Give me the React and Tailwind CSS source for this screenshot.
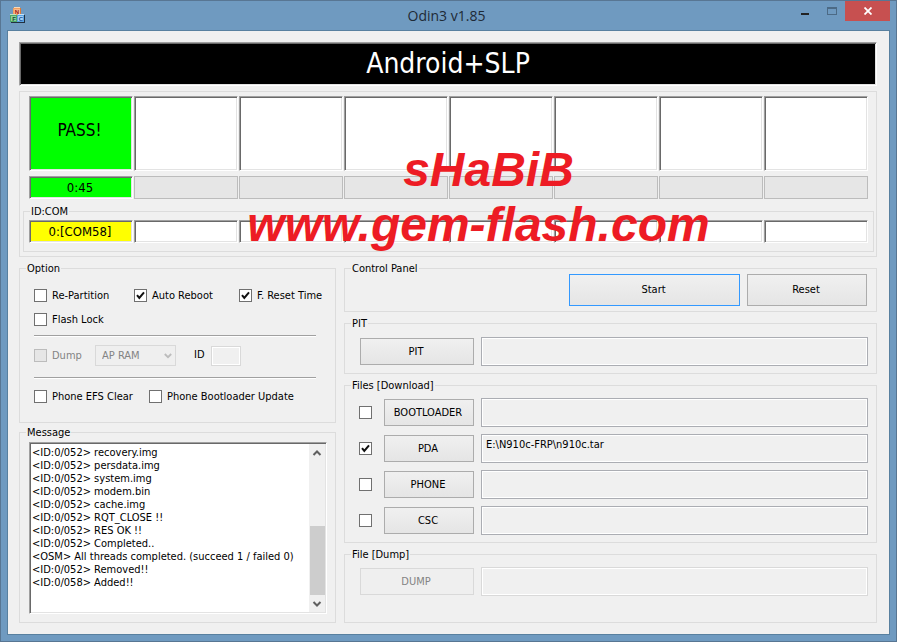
import { useState } from "react"
import clsx from "clsx"

const SLOTS = [
  { status: "PASS!", time: "0:45", port: "0:[COM58]" },
  {}, {}, {}, {}, {}, {}, {},
]

const LOG = [
  "<ID:0/052> recovery.img",
  "<ID:0/052> persdata.img",
  "<ID:0/052> system.img",
  "<ID:0/052> modem.bin",
  "<ID:0/052> cache.img",
  "<ID:0/052> RQT_CLOSE !!",
  "<ID:0/052> RES OK !!",
  "<ID:0/052> Completed..",
  "<OSM> All threads completed. (succeed 1 / failed 0)",
  "<ID:0/052> Removed!!",
  "<ID:0/058> Added!!",
]

const FILES = [
  { name: "BOOTLOADER", path: "", on: false },
  { name: "PDA", path: "E:\\N910c-FRP\\n910c.tar", on: true },
  { name: "PHONE", path: "", on: false },
  { name: "CSC", path: "", on: false },
]

// Two pixel sunken edge, like WS_EX_CLIENTEDGE
const SUNKEN =
  "border border-t-[#a0a0a0] border-l-[#a0a0a0] border-r-white border-b-white shadow-[inset_1px_1px_0_#696969,inset_-1px_-1px_0_#e3e3e3]"

function AppIcon() {
  return (
    <svg width="16" height="16" viewBox="0 0 16 16" shapeRendering="crispEdges" aria-hidden="true">
      <rect x="4" y="0" width="6" height="1" fill="#f7d9b8" />
      <rect x="3" y="1" width="8" height="7" fill="#f0a062" />
      <rect x="10" y="1" width="1" height="7" fill="#dd7a35" />
      <rect x="4" y="2" width="6" height="5" fill="#f8b98a" />
      <rect x="1" y="15" width="14" height="1" fill="#223040" />
      <rect x="14" y="8" width="1" height="8" fill="#223040" />
      <rect x="0" y="8" width="7" height="7" fill="#4fa868" />
      <rect x="0" y="7" width="6" height="1" fill="#bfe3c4" />
      <rect x="1" y="9" width="5" height="5" fill="#8fce9c" />
      <rect x="7" y="8" width="7" height="7" fill="#5aa3e0" />
      <rect x="8" y="7" width="6" height="1" fill="#c8e2f7" />
      <rect x="8" y="9" width="5" height="5" fill="#a8d2f4" />
      <g fontFamily="Liberation Sans" fontWeight="bold" fontSize="6" textAnchor="middle">
        <text x="7" y="7" fill="#a01818">N</text>
        <text x="4" y="14" fill="#10502a">F</text>
        <text x="11" y="14" fill="#144a94">C</text>
      </g>
    </svg>
  )
}

function TitleBar() {
  return (
    <header className="relative flex h-[29px] items-start pl-[3px]">
      <div className="pt-[6px]">
        <AppIcon />
      </div>
      <h1 className="absolute inset-x-0 top-[5px] pr-1 text-center font-['Open_Sans','Noto_Sans',sans-serif] text-[14px] leading-5 text-[#1e2a36]">
        Odin3 v1.85
      </h1>
      <div className="relative ml-auto flex h-5">
        <button aria-label="Minimize" className="flex w-[27px] items-center justify-center">
          <svg width="10" height="10" shapeRendering="crispEdges">
            <rect x="1" y="7" width="8" height="2" fill="#222" />
          </svg>
        </button>
        <button aria-label="Maximize" className="flex w-[27px] items-center justify-center">
          <svg width="10" height="10" shapeRendering="crispEdges">
            <path d="M0 1h10v8H0zM1 3v5h8V3z" fill="#4c6a85" fillRule="evenodd" />
          </svg>
        </button>
        <button aria-label="Close" className="flex w-[45px] items-center justify-center bg-[#c75050]">
          <svg width="8" height="8" viewBox="0 0 8 8">
            <path d="M0.5 0.5l7 7M7.5 0.5l-7 7" stroke="#fff" strokeWidth="1.8" />
          </svg>
        </button>
      </div>
    </header>
  )
}

function Group({ title, className, children }) {
  return (
    <fieldset className="min-w-0 border border-[#dcdcdc]">
      <legend className="ml-[6px] px-px leading-[11px]">{title}</legend>
      <div className={className}>{children}</div>
    </fieldset>
  )
}

function Check({ label, hideLabel, defaultChecked = false, disabled = false, className }) {
  const [checked, setChecked] = useState(defaultChecked)
  return (
    <label className={clsx("flex shrink-0 items-center gap-[5px] whitespace-nowrap", disabled && "text-[#838383]", className)}>
      <span className="relative block size-[13px] shrink-0">
        <input
          type="checkbox"
          aria-label={hideLabel ? label : undefined}
          checked={checked}
          disabled={disabled}
          onChange={(e) => setChecked(e.target.checked)}
          className="block size-[13px] appearance-none border border-[#707070] bg-white disabled:border-[#bcbcbc] disabled:bg-[#e6e6e6]"
        />
        {checked && (
          <svg viewBox="0 0 13 13" className="pointer-events-none absolute inset-0 size-[13px]">
            <path d="M3 6.2L5.3 9L10 3.4" fill="none" stroke="#111" strokeWidth="2" />
          </svg>
        )}
      </span>
      {!hideLabel && <span className="pt-px leading-[12px]">{label}</span>}
    </label>
  )
}

function Button({ children, className, primary, disabled }) {
  return (
    <button
      disabled={disabled}
      className={clsx(
        "shrink-0 border pt-px pr-[2px] text-center",
        disabled
          ? "border-[#d9d9d9] bg-[#efefef] text-[#838383]"
          : "bg-linear-to-b from-[#f0f0f0] to-[#e5e5e5]",
        !disabled && (primary ? "border-[#3399ff]" : "border-[#acacac]"),
        className
      )}
    >
      {children}
    </button>
  )
}

function PathBox({ label, value = "", disabled }) {
  return (
    <input
      aria-label={label}
      readOnly
      disabled={disabled}
      defaultValue={value}
      className="h-[29px] min-w-0 flex-1 border border-[#abadb3] bg-[#f0f0f0] px-1 pb-2 shadow-[inset_0_0_0_1px_#fff] outline-none disabled:border-[#d9d9d9]"
    />
  )
}

function Divider() {
  return <hr className="mr-[3px] h-[2px] border-t border-b border-t-[#a0a0a0] border-b-white" />
}

function Slots() {
  return (
    <section className="mt-[5px] border border-[#dcdcdc] pt-1 pr-[2px] pb-1 pl-[3px]">
      <div className="flex flex-col gap-[5px] px-[6px]">
        <div className="grid grid-cols-8 gap-px">
          {SLOTS.map((slot, i) => (
            <div
              key={i}
              className={clsx("flex h-[75px] items-center justify-center pr-[3px] pb-[6px] text-[17px]", SUNKEN, slot.status ? "bg-[#00ff00]" : "bg-white")}
            >
              {slot.status}
            </div>
          ))}
        </div>
        <div className="grid grid-cols-8 gap-px">
          {SLOTS.map((slot, i) => (
            <div
              key={i}
              className={clsx(
                "flex h-[23px] items-center justify-center pr-[2px] text-[13px]",
                slot.time ? "bg-[#00ff00]" : "border border-[#bcbcbc] bg-[#e6e6e6]",
                slot.time && SUNKEN
              )}
            >
              {slot.time}
            </div>
          ))}
        </div>
      </div>
      <div className="mt-[7px]">
        <Group title="ID:COM" className="grid grid-cols-8 gap-px px-[5px] pt-[3px] pb-2">
          {SLOTS.map((slot, i) => (
            <div
              key={i}
              className={clsx("flex h-[23px] items-center justify-center pr-[2px] text-[13px]", SUNKEN, slot.port ? "bg-[#ffff00]" : "bg-white")}
            >
              {slot.port}
            </div>
          ))}
        </Group>
      </div>
    </section>
  )
}

function Options() {
  return (
    <Group title="Option" className="pt-[15px] pr-4 pb-[19px] pl-[14px]">
      <div className="flex">
        <Check label="Re-Partition" className="w-[100px]" />
        <Check label="Auto Reboot" className="w-[105px]" defaultChecked />
        <Check label="F. Reset Time" defaultChecked />
      </div>
      <div className="flex pt-[11px] pb-[9px]">
        <Check label="Flash Lock" />
      </div>
      <Divider />
      <div className="flex items-center pt-2 pb-[11px]">
        <Check label="Dump" disabled className="w-[61px]" />
        <div className="relative">
          <select
            aria-label="Dump target"
            disabled
            className="block h-[21px] w-[81px] appearance-none border border-[#d9d9d9] bg-[#efefef] pt-px pl-[6px] text-[#838383] opacity-100"
          >
            <option>AP RAM</option>
          </select>
          <svg width="8" height="6" viewBox="0 0 8 6" className="pointer-events-none absolute top-2 right-1">
            <path d="M0.8 1L4 4.2L7.2 1" fill="none" stroke="#bcbcbc" strokeWidth="1.8" />
          </svg>
        </div>
        <label className="flex items-center gap-[6px] pl-[18px]">
          ID
          <input disabled className="h-5 w-[30px] border border-[#d9d9d9] bg-[#f0f0f0] shadow-[inset_0_0_0_1px_#fff]" />
        </label>
      </div>
      <Divider />
      <div className="flex pt-[11px]">
        <Check label="Phone EFS Clear" className="w-[115px]" />
        <Check label="Phone Bootloader Update" />
      </div>
    </Group>
  )
}

function Messages() {
  return (
    <Group title="Message" className="pt-1 pr-2 pb-2 pl-[9px]">
      <div className={clsx("flex h-[172px] bg-white p-px", SUNKEN)}>
        <ul className="min-w-0 flex-1 overflow-hidden pt-[2px] pl-px leading-[13px] whitespace-nowrap">
          {LOG.map((line, i) => (
            <li key={i}>{line}</li>
          ))}
        </ul>
        <div className="flex w-4 flex-col items-center bg-[#f0f0f0]">
          <svg width="16" height="17" viewBox="0 0 16 17">
            <path d="M4.5 11L8 7.5L11.5 11" fill="none" stroke="#606060" strokeWidth="2" />
          </svg>
          <div className="mt-auto h-[69px] w-[15px] bg-[#cdcdcd]" />
          <svg width="16" height="17" viewBox="0 0 16 17">
            <path d="M4.5 7L8 10.5L11.5 7" fill="none" stroke="#606060" strokeWidth="2" />
          </svg>
        </div>
      </div>
    </Group>
  )
}

export default function App() {
  return (
    <div className="relative min-h-screen border border-[#587693] bg-[#6f9ac0] px-[6px] pb-[6px] font-['DejaVu_Sans_Condensed','DejaVu_Sans',sans-serif] text-[11px] text-black">
      <TitleBar />
      <main className="border border-[#58809f] bg-[#f0f0f0] py-[11px] pr-3 pl-[11px]">
        <div className={clsx("flex h-11 items-center justify-center bg-black text-[28px] text-white", SUNKEN)}>
          Android+SLP
        </div>
        <Slots />

        <div className="mt-[6px] flex gap-2">
          <div className="flex w-[317px] shrink-0 flex-col gap-1">
            <Options />
            <Messages />
          </div>

          <div className="flex min-w-0 flex-1 flex-col gap-[6px]">
            <Group title="Control Panel" className="flex justify-end gap-[7px] pr-[9px] pb-[5px]">
              <Button primary className="h-8 w-[171px]">Start</Button>
              <Button className="h-8 w-[120px]">Reset</Button>
            </Group>
            <Group title="PIT" className="flex items-center gap-[7px] pt-2 pr-2 pb-[7px] pl-[15px]">
              <Button className="h-[27px] w-[114px]">PIT</Button>
              <PathBox label="PIT file" />
            </Group>
            <Group title="Files [Download]" className="flex flex-col gap-[7px] py-[7px] pr-2 pl-[14px]">
              {FILES.map((file) => (
                <div key={file.name} className="flex items-center gap-[7px]">
                  <Check label={file.name} hideLabel defaultChecked={file.on} className="w-[18px]" />
                  <Button className="h-[27px] w-[90px]">{file.name}</Button>
                  <PathBox label={`${file.name} file`} value={file.path} />
                </div>
              ))}
            </Group>
            <Group title="File [Dump]" className="flex items-center gap-[7px] pt-[7px] pr-2 pb-[26px] pl-[15px]">
              <Button disabled className="h-[27px] w-[114px]">DUMP</Button>
              <PathBox label="Dump file" disabled />
            </Group>
          </div>
        </div>
      </main>

      {/* Credit overlay */}
      <div className="pointer-events-none absolute inset-x-0 top-[141px] pl-[60px] text-center font-['Liberation_Sans',Arial,sans-serif] text-[48px] leading-[55px] font-bold text-[#ed1c24] italic">
        <p className="pl-5">sHaBiB</p>
        <p>www.gem-flash.com</p>
      </div>
    </div>
  )
}
